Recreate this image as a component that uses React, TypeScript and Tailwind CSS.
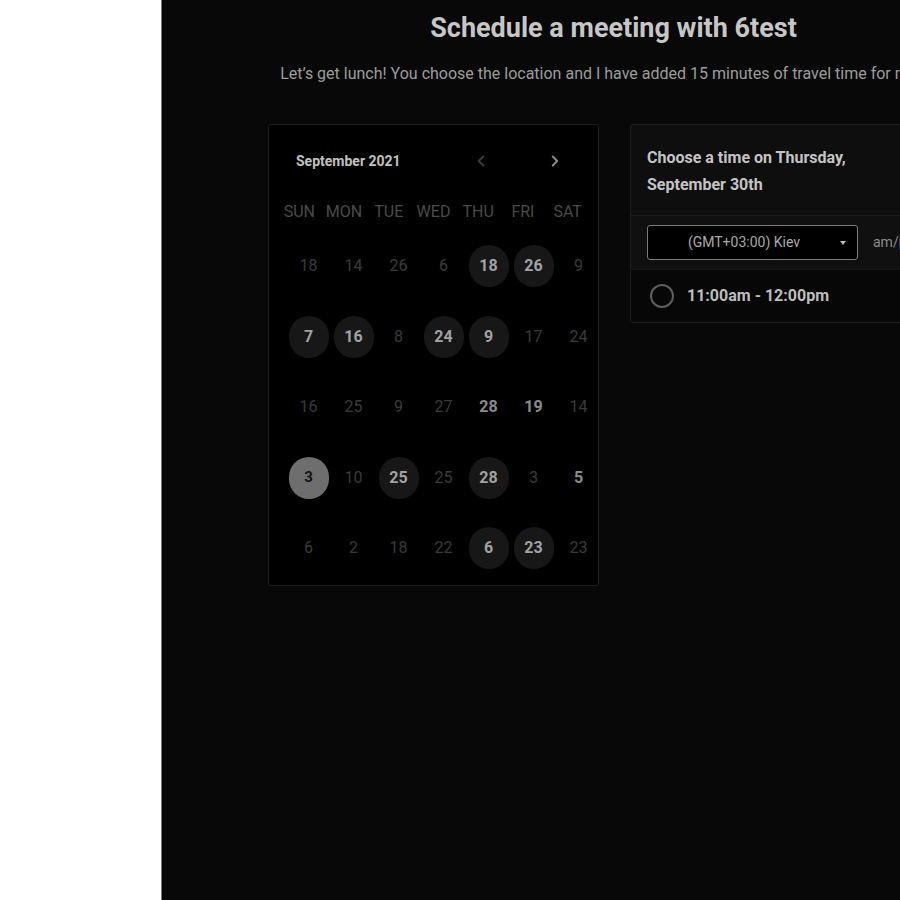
import { ChevronLeft, ChevronRight } from 'lucide-react';

type Day = { n: number; kind: 'dim' | 'bright' | 'avail' | 'selected' };

const d = (n: number): Day => ({ n, kind: 'dim' });
const b = (n: number): Day => ({ n, kind: 'bright' });
const a = (n: number): Day => ({ n, kind: 'avail' });
const s = (n: number): Day => ({ n, kind: 'selected' });

const weeks: Day[][] = [
  [d(18), d(14), d(26), d(6), a(18), a(26), d(9)],
  [a(7), a(16), d(8), a(24), a(9), d(17), d(24)],
  [d(16), d(25), d(9), d(27), b(28), b(19), d(14)],
  [s(3), d(10), a(25), d(25), a(28), d(3), b(5)],
  [d(6), d(2), d(18), d(22), a(6), a(23), d(23)],
];

const weekdays = ['SUN', 'MON', 'TUE', 'WED', 'THU', 'FRI', 'SAT'];

function DayCell({ day }: { day: Day }) {
  if (day.kind === 'selected') {
    return (
      <div className="w-[40px] h-[42px] rounded-full bg-[#6e6e6e] flex items-center justify-center text-[15px] font-bold text-[#111]">
        {day.n}
      </div>
    );
  }
  if (day.kind === 'avail') {
    return (
      <div className="w-[40px] h-[42px] rounded-full bg-[#171717] flex items-center justify-center text-[16px] font-bold text-[#a2a2a2]">
        {day.n}
      </div>
    );
  }
  return (
    <div
      className={`w-[40px] h-[42px] flex items-center justify-center text-[16px] ${
        day.kind === 'bright' ? 'font-bold text-[#8a8a8a]' : 'text-[#3a3a3a]'
      }`}
    >
      {day.n}
    </div>
  );
}

export default function App() {
  return (
    <div
      className="w-[900px] h-[900px] overflow-hidden flex bg-white"
      style={{ fontFamily: 'Roboto, "Liberation Sans", sans-serif' }}
    >
      <div className="w-[161px] shrink-0 bg-white" />
      <div className="w-[904px] shrink-0 h-full bg-[#080808] border-l border-[#7a7a7a] flex flex-col items-center">
        <h1 className="mt-[11px] text-[27px] leading-[34px] font-bold text-[#c6c6c6]">
          Schedule a meeting with 6test
        </h1>
        <p className="mt-[17px] text-[16px] leading-[24px] text-[#9c9c9c] whitespace-nowrap">
          Let’s get lunch! You choose the location and I have added 15 minutes of travel time for myself.
        </p>

        <div className="mt-[38px] flex gap-[32px] items-start">
          {/* Calendar */}
          <div className="w-[331px] h-[462px] bg-black border border-[#1e1e1e] rounded-[3px] px-[8px]">
            <div className="flex items-center h-[70px] pt-[2px]">
              <span className="ml-[19px] text-[14px] font-bold text-[#c2c2c2]">September 2021</span>
              <ChevronLeft className="ml-[71px] w-[18px] h-[18px] text-[#3c3c3c]" strokeWidth={2.5} />
              <ChevronRight className="ml-[56px] w-[18px] h-[18px] text-[#8a8a8a]" strokeWidth={2.5} />
            </div>
            <div className="grid grid-cols-7 text-[16px] text-[#4a4a4a] h-[24px] items-center mt-[5px]">
              {weekdays.map((w) => (
                <div key={w} className="text-center">
                  {w}
                </div>
              ))}
            </div>
            <div className="mt-[21px] flex flex-col gap-[28.5px] pl-[9px]">
              {weeks.map((week, i) => (
                <div key={i} className="grid grid-cols-7 w-[315px]">
                  {week.map((day, j) => (
                    <div key={j} className="flex justify-center">
                      <DayCell day={day} />
                    </div>
                  ))}
                </div>
              ))}
            </div>
          </div>

          {/* Time picker */}
          <div className="w-[329px] -ml-[1px] bg-[#0e0e0e] border border-[#1e1e1e] rounded-[3px] overflow-hidden">
            <div className="px-[16px] pt-[19px] pb-[17px] border-b border-[#1c1c1c]">
              <h2 className="text-[16px] leading-[27px] font-bold text-[#c4c4c4]">
                Choose a time on Thursday,
                <br />
                September 30th
              </h2>
            </div>
            <div className="px-[16px] py-[9px] flex items-center bg-[#101010]">
              <div className="w-[211px] h-[35px] bg-black border border-[#7a7a7a] rounded-[3px] flex items-center">
                <span className="flex-1 text-center text-[14px] text-[#a8a8a8]">(GMT+03:00) Kiev</span>
                <span className="mr-[11px] w-0 h-0 border-l-[3px] border-r-[3px] border-t-[4px] border-l-transparent border-r-transparent border-t-[#bbbbbb]" />
              </div>
              <span className="ml-[15px] text-[14px] text-[#8c8c8c]">am/pm</span>
            </div>
            <div className="h-[53px] bg-[#070707] border-t border-[#141414] flex items-center px-[19px]">
              <span className="w-[24px] h-[24px] rounded-full border-2 border-[#5e5e5e]" />
              <span className="ml-[13px] text-[16px] font-bold text-[#bdbdbd]">11:00am - 12:00pm</span>
            </div>
          </div>
        </div>
      </div>
    </div>
  );
}
